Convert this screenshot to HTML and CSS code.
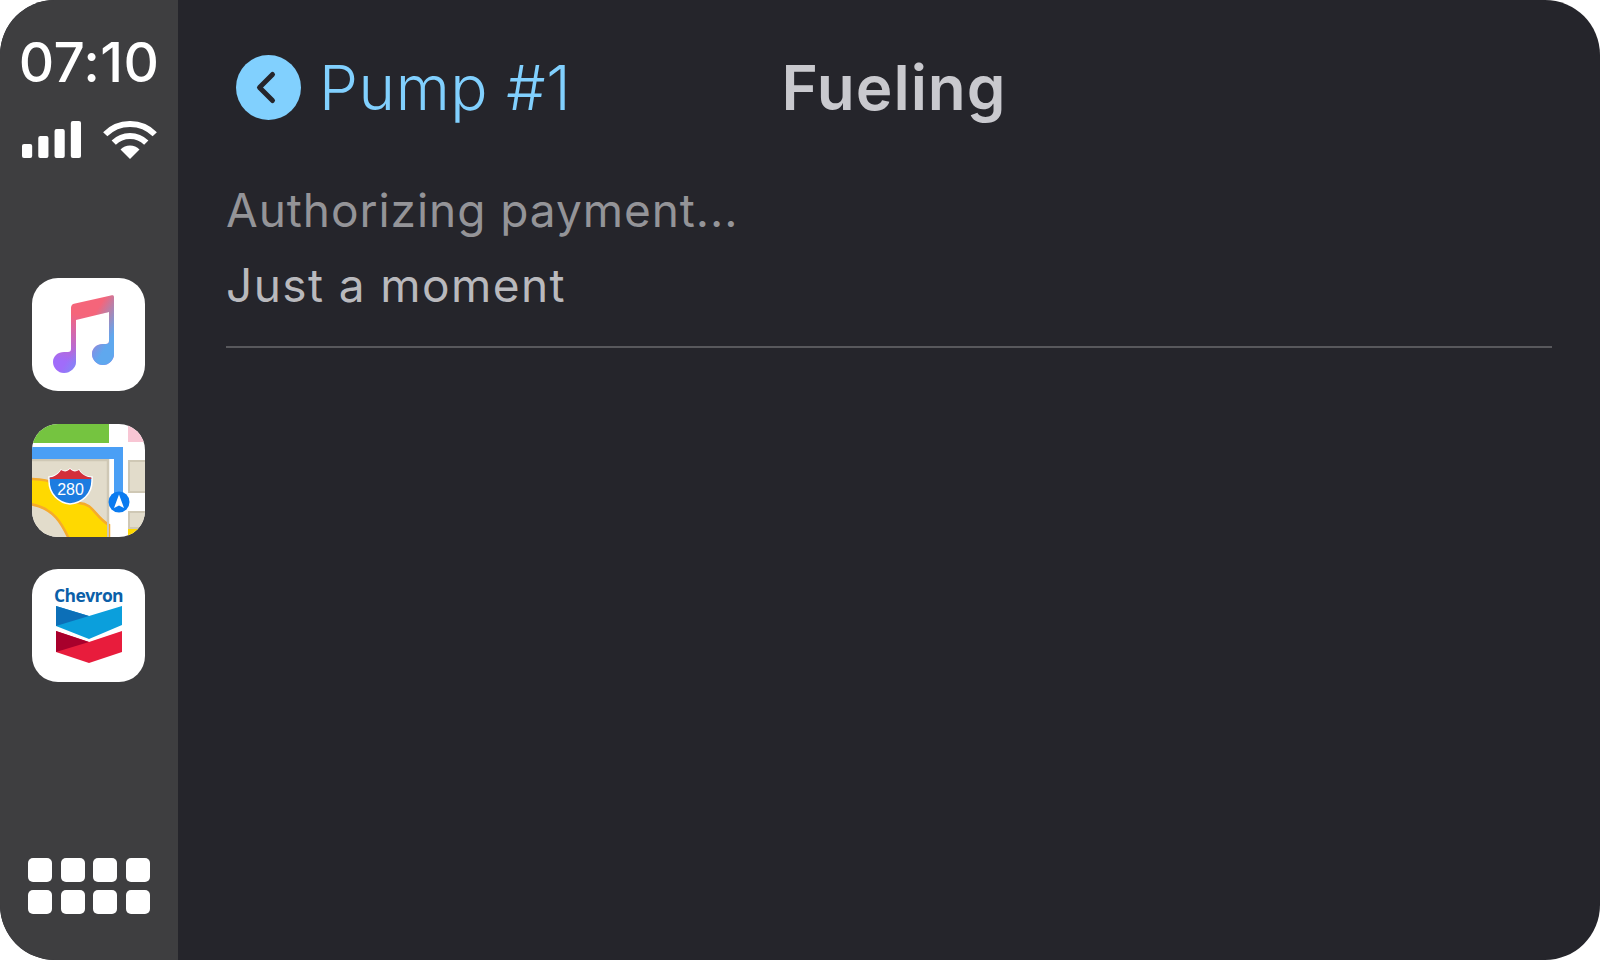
FILE: index.html
```html
<!DOCTYPE html>
<html lang="en">
<head>
<meta charset="utf-8">
<title>Fueling</title>
<link rel="stylesheet" href="styles.css">
</head>
<body>
<div class="screen">
  <aside class="sidebar">
    <div class="time">07:10</div>
    <div class="status">
      <svg class="signal" width="59" height="37" viewBox="0 0 58 37" preserveAspectRatio="none">
        <rect x="0" y="23" width="10" height="14" rx="2"/>
        <rect x="16" y="15" width="10" height="22" rx="2"/>
        <rect x="32" y="8" width="10" height="29" rx="2"/>
        <rect x="48" y="0" width="10" height="37" rx="2"/>
      </svg>
      <svg class="wifi" width="54" height="38" viewBox="0 0 54 38">
        <path class="arc" d="M2.25 13.25A35 35 0 0 1 51.75 13.25"/>
        <path class="arc" d="M10.74 21.74A23 23 0 0 1 43.26 21.74"/>
        <path class="wedge" d="M27 38L17.5 28.5A13.4 13.4 0 0 1 36.5 28.5Z"/>
      </svg>
    </div>
    <div class="apps">
      <svg class="app" viewBox="0 0 113 113">
        <defs>
          <linearGradient id="noteV" gradientUnits="userSpaceOnUse" x1="45" y1="30" x2="35" y2="90">
            <stop offset="0.1" stop-color="#f5657a"/>
            <stop offset="0.9" stop-color="#a06cfa"/>
          </linearGradient>
          <linearGradient id="noteH" gradientUnits="userSpaceOnUse" x1="45" y1="50" x2="78" y2="70">
            <stop offset="0.2" stop-color="#5fa8ee" stop-opacity="0"/>
            <stop offset="0.9" stop-color="#5fa8ee"/>
          </linearGradient>
          <path id="note" d="M39 30Q39 26.500 42 25.800L80 17.200Q82 16.800 82 19L82 76C82 82 77 87 71 87C65 87 60 82 60 76C60 70 65 66 71 66L74 66Q77 66 77 63L77 34L44 42L44 84C44 90 38 95 32 95C26 95 21 90 21 84C21 78 26 74 32 74L36 74Q39 74 39 71Z"/>
        </defs>
        <rect class="tile" width="113" height="113" rx="26"/>
        <use href="#note" fill="url(#noteV)"/>
        <use href="#note" fill="url(#noteH)"/>
      </svg>
      <svg class="app" viewBox="0 0 113 113">
        <defs><clipPath id="mapClip"><rect width="113" height="113" rx="26"/></clipPath></defs>
        <g clip-path="url(#mapClip)">
          <rect width="113" height="113" fill="#ffffff"/>
          <rect width="77" height="19" fill="#75c440"/>
          <rect x="96" width="17" height="18" fill="#f8c6d4"/>
          <rect y="35" width="77" height="78" fill="#e2dccb"/>
          <path d="M0 36H76V113" fill="none" stroke="#cfc8b5" stroke-width="2.500"/>
          <path d="M-2 55Q15 55 23 60C34 68 36 78 47 79C62 80 62 92 77 101V115H37C30 100 22 84 -2 80Z" fill="#ffd900" stroke="#f5ab2c" stroke-width="2.500"/>
          <path d="M76 36V113" fill="none" stroke="#cfc8b5" stroke-width="2"/>
          <rect x="97" y="37" width="18" height="31" fill="#e2dccb" stroke="#cfc8b5" stroke-width="2"/>
          <rect x="97" y="88" width="18" height="16" fill="#e2dccb" stroke="#cfc8b5" stroke-width="2"/>
          <rect x="96" y="105" width="17" height="8" fill="#ffd900"/>
          <path d="M0 23H91V72H82V35H0Z" fill="#4a9ff5"/>
          <path d="M17 53C22 53 27 50 29 46C32 48 35 48 38 45C41 48 44 48 47 46C49 50 54 53 60 53V57C60 70 50 79 38 80C27 79 17 70 17 57Z" fill="#1d7ce0" stroke="#ffffff" stroke-width="1.500"/>
          <path d="M17.700 53.500C22 53 27 50 29 46C32 48 35 48 38 45C41 48 44 48 47 46C49 50 54 53 59.300 53.500V55H17.700Z" fill="#d32f3a"/>
          <text class="shield-num" x="38.500" y="71">280</text>
          <circle cx="87" cy="78" r="10.500" fill="#0a7bf0"/>
          <path d="M87 70.500L92 84L87 81.500L82 84Z" fill="#ffffff"/>
        </g>
      </svg>
      <svg class="app" viewBox="0 0 113 113">
        <rect class="tile" width="113" height="113" rx="26"/>
        <text class="brand" x="56.500" y="33">Chevron</text>
        <path d="M24 37L57 47L90 37V56L57 70L24 57Z" fill="#0b9fdc"/>
        <path d="M24 37L57 47L24 57Z" fill="#0c6fb8"/>
        <path d="M24 62L57 73L90 62V83L57 94L24 83Z" fill="#e81c3c"/>
        <path d="M24 62L57 73L24 83Z" fill="#a8002c"/>
      </svg>
    </div>
    <div class="launcher">
      <span class="dot"></span><span class="dot"></span><span class="dot"></span><span class="dot"></span>
      <span class="dot"></span><span class="dot"></span><span class="dot"></span><span class="dot"></span>
    </div>
  </aside>
  <main class="main">
    <header class="header">
      <div class="back">
        <svg class="back-icon" width="65" height="65" viewBox="0 0 65 65">
          <circle cx="32.500" cy="32.500" r="32.500" fill="#81d0fe"/>
          <path d="M36.500 19.500L23.500 32.500L36.500 45.500" fill="none" stroke="#25252b" stroke-width="5" stroke-linecap="round" stroke-linejoin="round"/>
        </svg>
        <span class="back-label">Pump #1</span>
      </div>
      <h1 class="title">Fueling</h1>
    </header>
    <section class="message">
      <p class="line-primary">Authorizing payment...</p>
      <p class="line-secondary">Just a moment</p>
    </section>
    <div class="divider"></div>
  </main>
</div>
</body>
</html>
```
FILE: styles.css
```css
* { box-sizing: border-box; }
html, body { margin: 0; padding: 0; background: #ffffff; }
body { font-family: Inter, "Liberation Sans", sans-serif; }
.screen {
  width: 1600px;
  height: 960px;
  display: flex;
  border-radius: 55px;
  overflow: hidden;
  background: #25252b;
}
.sidebar {
  width: 178px;
  flex: none;
  display: flex;
  flex-direction: column;
  align-items: center;
  background: #3e3e40;
  padding-top: 30px;
}
.time {
  font-size: 55px;
  line-height: 64px;
  font-weight: 550;
  color: #ffffff;
  letter-spacing: 0.300px;
}
.status {
  display: flex;
  align-items: flex-start;
  gap: 22px;
  margin-top: 27px;
  width: 134px;
}
.signal { fill: #ffffff; flex: none; }
.wifi { flex: none; }
.arc { fill: none; stroke: #ffffff; stroke-width: 6; }
.wedge { fill: #ffffff; }
.apps {
  display: flex;
  flex-direction: column;
  gap: 32.500px;
  margin-top: 119px;
  margin-right: 1px;
}
.app { width: 113px; height: 113px; display: block; }
.tile { fill: #ffffff; }
.shield-num {
  font-family: "Liberation Sans", sans-serif;
  font-size: 16px;
  fill: #ffffff;
  text-anchor: middle;
}
.brand {
  font-family: "Open Sans", sans-serif;
  font-size: 17.500px;
  font-weight: 700;
  fill: #0b5fa8;
  text-anchor: middle;
  letter-spacing: -0.600px;
}
.launcher {
  display: grid;
  grid-template-columns: repeat(4, 24px);
  grid-auto-rows: 24px;
  gap: 8px 8.600px;
  margin-top: auto;
  margin-bottom: 46px;
}
.dot { background: #ffffff; border-radius: 5px; }
.main {
  flex: 1;
  display: flex;
  flex-direction: column;
  padding: 55px 48px 0 48px;
}
.header {
  display: grid;
  grid-template-columns: 1fr auto 1fr;
  align-items: center;
  padding-left: 10px;
}
.back { display: flex; align-items: center; gap: 18px; }
.back-icon { flex: none; }
.back-label {
  font-size: 62px;
  line-height: 65px;
  font-weight: 350;
  color: #81d0fe;
  letter-spacing: 0.600px;
}
.title {
  margin: 0;
  font-size: 62px;
  line-height: 65px;
  font-weight: 600;
  color: #c9c9ce;
  letter-spacing: 1px;
}
.message { margin-top: 62px; }
.line-primary {
  margin: 0;
  font-size: 46px;
  line-height: 56px;
  font-weight: 400;
  color: #949498;
  letter-spacing: 0.950px;
}
.line-secondary {
  margin: 19px 0 0;
  font-size: 46px;
  line-height: 56px;
  font-weight: 430;
  color: #b9b9bd;
  letter-spacing: 1.400px;
}
.divider {
  height: 2px;
  background: #58585c;
  margin-top: 33px;
}
```
